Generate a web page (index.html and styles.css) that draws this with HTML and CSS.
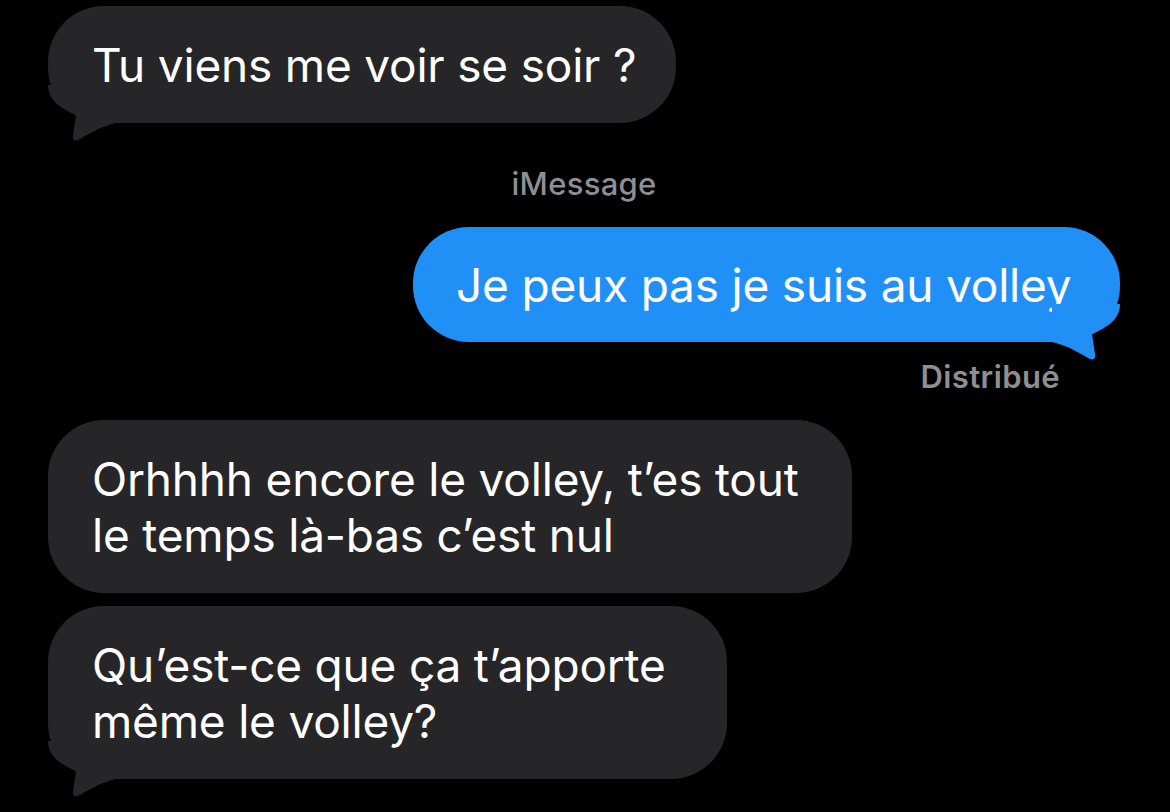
FILE: index.html
```html
<!DOCTYPE html>
<html lang="fr">
<head>
<meta charset="utf-8">
<title>Messages</title>
<link rel="stylesheet" href="styles.css">
</head>
<body>
<main class="thread">
  <div class="bubble received tailed b1">
    Tu viens me voir se soir ?
    <svg class="tail" viewBox="0 0 70 60" width="70" height="60"><path d="M0 0 C0 16 14 24 28 30 L25 50 Q24 57 30 55 C40 50 50 42 68 38 L68 0 Z"/></svg>
  </div>
  <div class="label service">iMessage</div>
  <div class="bubble sent tailed b2">
    Je peux pas je suis au volley
    <svg class="tail" viewBox="0 0 70 60" width="70" height="60"><path d="M0 0 C0 16 14 24 28 30 L25 50 Q24 57 30 55 C40 50 50 42 68 38 L68 0 Z"/></svg>
  </div>
  <div class="label status">Distribué</div>
  <div class="bubble received b3">Orhhhh encore le volley, t’es tout<br>le temps là-bas c’est nul</div>
  <div class="bubble received tailed b4">
    Qu’est-ce que ça t’apporte<br>même le volley?
    <svg class="tail" viewBox="0 0 70 60" width="70" height="60"><path d="M0 0 C0 16 14 24 28 30 L25 50 Q24 57 30 55 C40 50 50 42 68 38 L68 0 Z"/></svg>
  </div>
</main>
</body>
</html>
```

FILE: styles.css
```css
* { box-sizing: border-box; }
html, body {
  margin: 0;
  background: #000;
  height: 100%;
  overflow: hidden;
}
body {
  font-family: Inter, "Liberation Sans", sans-serif;
  color: #fff;
}
.thread {
  display: flex;
  flex-direction: column;
  padding: 6px 50px 0 48px;
}
.bubble {
  position: relative;
  align-self: flex-start;
  font-size: 46px;
  line-height: 56px;
  letter-spacing: -0.2px;
  padding: 31px 0 30px 44px;
  border-radius: 56px;
  background: #262629;
  white-space: nowrap;
}
.bubble.sent {
  align-self: flex-end;
  background: #2190f6;
  padding: 30px 0 29px 43px;
}
.b1 { width: 628px; }
.b2 { width: 707px; }
.b3 { width: 804px; }
.b4 { width: 679px; margin-top: 13px; }
.tail {
  position: absolute;
  left: 0;
  bottom: -22px;
  fill: #262629;
}
.sent .tail {
  left: auto;
  right: 0;
  transform: scaleX(-1);
  fill: #2190f6;
}
.label {
  font-size: 31px;
  line-height: 36px;
  color: #8e8e93;
}
.service {
  align-self: center;
  font-weight: 500;
  letter-spacing: 0.3px;
  margin: 43px 0 25px;
}
.status {
  align-self: flex-end;
  font-weight: 600;
  letter-spacing: 0.4px;
  margin: 17px 60px 25px 0;
}
```
